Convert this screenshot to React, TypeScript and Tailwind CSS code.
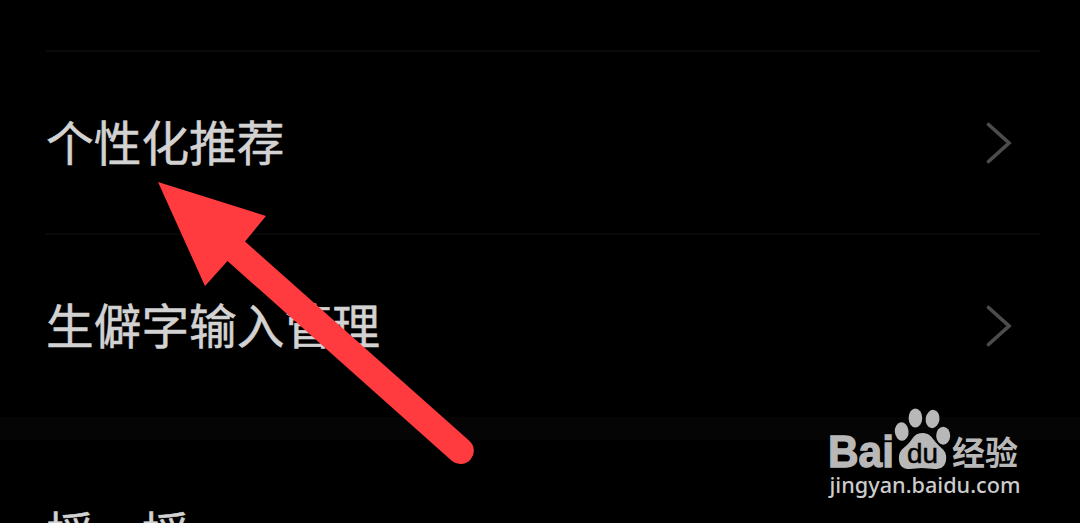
type Row = { label: string };

const ROWS: Row[] = [{ label: "个性化推荐" }, { label: "生僻字输入管理" }];

const LABEL_CLASS =
  "text-[47.7px] leading-none whitespace-nowrap [-webkit-text-stroke:0.5px_#d2d2d2]";

function Chevron() {
  return (
    <svg className="mr-[27px] h-12 w-7" viewBox="0 0 28 48" fill="none">
      <path
        d="M3.5 5.5 24 24 3.5 42.5"
        stroke="#4c4c4c"
        strokeWidth="3.7"
        strokeLinecap="round"
        strokeLinejoin="miter"
      />
    </svg>
  );
}

function SettingRow({ label }: Row) {
  return (
    <div className="mr-[40px] ml-[46px] flex h-[183px] items-center justify-between border-t-2 border-[#0a0a0a]">
      <span className={`pb-1 ${LABEL_CLASS}`}>{label}</span>
      <Chevron />
    </div>
  );
}

function Arrow() {
  return (
    <svg className="absolute top-[170px] left-[140px] h-[310px] w-[350px]" viewBox="140 170 350 310">
      <path
        d="M158 182 266 216 245 241.500 469 440.500A13.200 13.200 0 0 1 452 461L227.500 261 205 286Z"
        fill="#ff3b3f"
      />
    </svg>
  );
}

function Watermark() {
  return (
    <svg className="absolute top-[400px] left-[820px] h-[110px] w-[215px]" viewBox="820 400 215 110" fill="#b8b8b8">
      <text
        x="828"
        y="467"
        textLength="66"
        lengthAdjust="spacingAndGlyphs"
        stroke="#b8b8b8"
        strokeWidth="1.300"
        className="font-['Liberation_Sans',sans-serif] text-[43.5px] font-bold"
      >
        Bai
      </text>
      <ellipse cx="901.700" cy="431.500" rx="6.900" ry="9.200" transform="rotate(-5 901.700 431.500)" />
      <ellipse cx="915.400" cy="418" rx="6.800" ry="9.500" />
      <ellipse cx="932.600" cy="419" rx="6.900" ry="9.200" transform="rotate(8 932.600 419)" />
      <ellipse cx="943.200" cy="435.700" rx="7" ry="9" />
      <path d="M922 433c-4.500 0-7.500 2-10 6-3 5-7 7.500-10 10.500-3.500 3.500-3.500 9-2.500 13 1.200 4.800 5 6.500 10 6.500 4.500 0 8-1 12.500-1s8 1 13 1c5.500 0 9-2 10.500-6.500 1.300-4 1-9-2-12.500-2.800-3.200-7-6-10-10.500-3-4.500-6.500-6.500-11.500-6.500Z" />
      <text
        x="907"
        y="462.500"
        textLength="31"
        lengthAdjust="spacingAndGlyphs"
        fill="#000"
        stroke="#000"
        strokeWidth="0.500"
        className="font-['Liberation_Sans',sans-serif] text-[27px]"
      >
        du
      </text>
      <text
        x="952"
        y="464.500"
        textLength="66"
        className="font-['Noto_Sans_CJK_SC',sans-serif] text-[33px] font-bold"
      >
        经验
      </text>
      <text
        x="829.500"
        y="493"
        fill="#cccccc"
        textLength="191"
        lengthAdjust="spacingAndGlyphs"
        className="font-['Noto_Sans',sans-serif] text-[22.5px] font-medium"
      >
        jingyan.baidu.com
      </text>
    </svg>
  );
}

export default function App() {
  return (
    <main className="relative h-[523px] w-[1080px] overflow-hidden bg-black font-['Noto_Sans_CJK_SC',sans-serif] text-[#d2d2d2]">
      <div className="pt-[50px]">
        {ROWS.map((row) => (
          <SettingRow key={row.label} label={row.label} />
        ))}
      </div>
      <div className="mt-px h-[23px] bg-[#050505]" />
      <div className="mx-[46px] flex h-[183px] items-center">
        <span className={LABEL_CLASS}>摇一摇</span>
      </div>
      <Arrow />
      <Watermark />
    </main>
  );
}
